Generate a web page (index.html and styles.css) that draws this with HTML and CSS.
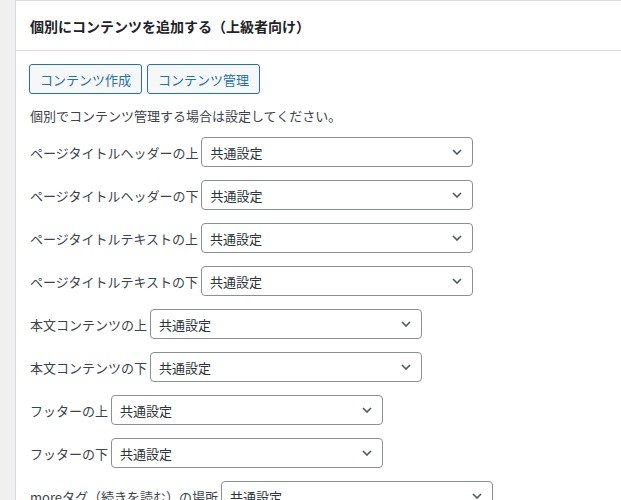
FILE: index.html
```html
<!DOCTYPE html>
<html lang="ja">
<head>
  <meta charset="UTF-8" />
  <title>個別にコンテンツを追加する</title>
  <link rel="stylesheet" href="styles.css">
</head>
<body>
  <div class="postbox">
    <!-- Header -->
    <div class="postbox-header">
      <h2>個別にコンテンツを追加する（上級者向け）</h2>
    </div>

    <div class="inside">
      <div class="buttons">
        <a class="button" href="#">コンテンツ作成</a>
        <a class="button" href="#">コンテンツ管理</a>
      </div>
      <p class="note">個別でコンテンツ管理する場合は設定してください。</p>

      <div class="row">
        <label>ページタイトルヘッダーの上</label>
        <div class="select"><span>共通設定</span><svg width="10" height="6" viewBox="0 0 10 6"><path d="M1 1l4 4 4-4" fill="none" stroke="#50575e" stroke-width="1.6"/></svg></div>
      </div>
      <div class="row">
        <label>ページタイトルヘッダーの下</label>
        <div class="select"><span>共通設定</span><svg width="10" height="6" viewBox="0 0 10 6"><path d="M1 1l4 4 4-4" fill="none" stroke="#50575e" stroke-width="1.6"/></svg></div>
      </div>
      <div class="row">
        <label>ページタイトルテキストの上</label>
        <div class="select"><span>共通設定</span><svg width="10" height="6" viewBox="0 0 10 6"><path d="M1 1l4 4 4-4" fill="none" stroke="#50575e" stroke-width="1.6"/></svg></div>
      </div>
      <div class="row">
        <label>ページタイトルテキストの下</label>
        <div class="select"><span>共通設定</span><svg width="10" height="6" viewBox="0 0 10 6"><path d="M1 1l4 4 4-4" fill="none" stroke="#50575e" stroke-width="1.6"/></svg></div>
      </div>
      <div class="row">
        <label>本文コンテンツの上</label>
        <div class="select"><span>共通設定</span><svg width="10" height="6" viewBox="0 0 10 6"><path d="M1 1l4 4 4-4" fill="none" stroke="#50575e" stroke-width="1.6"/></svg></div>
      </div>
      <div class="row">
        <label>本文コンテンツの下</label>
        <div class="select"><span>共通設定</span><svg width="10" height="6" viewBox="0 0 10 6"><path d="M1 1l4 4 4-4" fill="none" stroke="#50575e" stroke-width="1.6"/></svg></div>
      </div>
      <div class="row">
        <label>フッターの上</label>
        <div class="select"><span>共通設定</span><svg width="10" height="6" viewBox="0 0 10 6"><path d="M1 1l4 4 4-4" fill="none" stroke="#50575e" stroke-width="1.6"/></svg></div>
      </div>
      <div class="row">
        <label>フッターの下</label>
        <div class="select"><span>共通設定</span><svg width="10" height="6" viewBox="0 0 10 6"><path d="M1 1l4 4 4-4" fill="none" stroke="#50575e" stroke-width="1.6"/></svg></div>
      </div>
      <div class="row">
        <label>moreタグ（続きを読む）の場所</label>
        <div class="select"><span>共通設定</span><svg width="10" height="6" viewBox="0 0 10 6"><path d="M1 1l4 4 4-4" fill="none" stroke="#50575e" stroke-width="1.6"/></svg></div>
      </div>
    </div>
  </div>
</body>
</html>
```

FILE: styles.css
```css
body {
  margin: 0;
  background-color: #f0f0f1;
  font-family: "Noto Sans CJK JP", "Noto Sans", sans-serif;
  font-size: 13px;
  color: #3c434a;
  overflow: hidden;
}

/* Panel */
.postbox {
  margin-left: 15px;
  margin-right: -20px;
  background: #fff;
  border: 1px solid #dcdcde;
}
.postbox-header {
  height: 49px;
  display: flex;
  align-items: center;
  border-bottom: 1px solid #dcdcde;
  padding: 0 14px;
}
.postbox-header h2 {
  margin: 0;
  font-size: 14px;
  font-weight: bold;
  color: #1d2327;
}

.inside {
  padding: 13px 13px 0;
}

/* Buttons */
.buttons {
  display: flex;
  gap: 5px;
}
.button {
  display: inline-flex;
  align-items: center;
  height: 28px;
  padding: 0 10px;
  border: 1px solid #2271b1;
  border-radius: 3px;
  background: #f6f7f7;
  color: #2271b1;
  text-decoration: none;
  font-size: 13px;
}

.note {
  margin: 12px 0 11px 1px;
  line-height: 20px;
}

/* Select rows */
.row {
  display: flex;
  align-items: center;
  gap: 3px;
  margin-bottom: 13px;
  padding-left: 1px;
}
.row label {
  white-space: nowrap;
}
.select {
  box-sizing: border-box;
  width: 272px;
  height: 30px;
  display: flex;
  align-items: center;
  justify-content: space-between;
  padding: 0 10px 0 8px;
  border: 1px solid #8c8f94;
  border-radius: 4px;
  color: #2c3338;
  background: #fff;
}
```
